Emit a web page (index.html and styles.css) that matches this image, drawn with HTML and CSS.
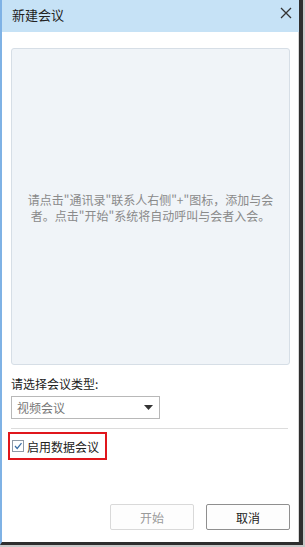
FILE: index.html
```html
<!DOCTYPE html>
<html lang="zh">
<head>
<meta charset="utf-8">
<link rel="stylesheet" href="styles.css">
</head>
<body>
<div class="frame">
  <div class="window">
    <div class="titlebar">
      <span class="title">新建会议</span>
      <svg class="close" width="12" height="12" viewBox="0 0 12 12"><path d="M1 1 L11 11 M11 1 L1 11" stroke="#333" stroke-width="1.3" fill="none"/></svg>
    </div>
    <div class="content">
      <div class="panel">
        <p class="hint">请点击"通讯录"联系人右侧"+"图标，添加与会者。点击"开始"系统将自动呼叫与会者入会。</p>
      </div>
      <div class="label">请选择会议类型:</div>
      <div class="select">
        <span>视频会议</span>
        <svg width="9" height="5" viewBox="0 0 9 5"><path d="M0 0 H9 L4.5 5 Z" fill="#333"/></svg>
      </div>
      <div class="sep"></div>
      <div class="check-row">
        <span class="checkbox"><svg width="10" height="10" viewBox="0 0 10 10"><path d="M2 5 L4.2 7.5 L8.5 2.2" stroke="#3a6ea5" stroke-width="1.2" fill="none"/></svg></span>
        <span class="check-label">启用数据会议</span>
      </div>
      <div class="spacer"></div>
      <div class="buttons">
        <button class="btn disabled">开始</button>
        <button class="btn">取消</button>
      </div>
    </div>
  </div>
</div>
</body>
</html>
```
FILE: styles.css
```css
html, body {
  margin: 0;
  padding: 0;
  background: #d8d8d8;
}
.frame {
  width: 305px;
  height: 547px;
  box-sizing: border-box;
  padding: 0 2px 2px 0;
  background: #c8c8c8;
}
.window {
  width: 303px;
  height: 545px;
  box-sizing: border-box;
  border-left: 2px solid #7fb2e5;
  border-right: 4px solid #2e2e2e;
  border-bottom: 3px solid #2e2e2e;
  background: #ffffff;
  display: flex;
  flex-direction: column;
  font-family: "Noto Sans CJK SC", "Noto Sans", sans-serif;
}
.titlebar {
  height: 32px;
  flex: none;
  background: #c6e2f6;
  display: flex;
  align-items: center;
  justify-content: space-between;
  padding: 0 7px 4px 10px;
  box-sizing: border-box;
}
.title {
  font-size: 13px;
  color: #222;
}
.close {
  margin-top: -2px;
}
.content {
  flex: 1;
  display: flex;
  flex-direction: column;
  padding: 16px 8px 12px 9px;
  border-right: 1px solid #d8d8d8;
}
.panel {
  height: 317px;
  box-sizing: border-box;
  background: #f0f4f8;
  border: 1px solid #d6dee6;
  border-radius: 3px;
  display: flex;
  align-items: center;
  justify-content: center;
  padding: 2px 14px 0;
}
.hint {
  margin: 0;
  font-size: 12px;
  line-height: 16px;
  color: #8a8a8a;
  text-align: center;
}
.label {
  margin-top: 11px;
  font-size: 12px;
  line-height: 16px;
  color: #222;
}
.select {
  margin-top: 4px;
  width: 149px;
  height: 23px;
  box-sizing: border-box;
  border: 1px solid #b8b8b8;
  display: flex;
  align-items: center;
  justify-content: space-between;
  padding: 0 6px 0 5px;
  font-size: 12px;
  color: #777;
}
.sep {
  margin-top: 9px;
  height: 1px;
  background: #dcdcdc;
  margin-right: 2px;
}
.check-row {
  margin-top: 3px;
  margin-left: -3px;
  width: 99px;
  height: 28px;
  box-sizing: border-box;
  border: 2px solid #e0161c;
  display: flex;
  align-items: center;
  padding-left: 2px;
  gap: 3px;
}
.checkbox {
  width: 12px;
  height: 12px;
  box-sizing: border-box;
  border: 1px solid #8f9aa6;
  background: #fff;
  display: flex;
  align-items: center;
  justify-content: center;
}
.check-label {
  font-size: 12px;
  color: #222;
}
.spacer {
  flex: 1;
}
.buttons {
  display: flex;
  justify-content: flex-end;
  gap: 12px;
}
.btn {
  width: 84px;
  height: 26px;
  border: 1px solid #8f8f8f;
  border-radius: 2px;
  background: #fdfdfd;
  font-family: "Noto Sans CJK SC", "Noto Sans", sans-serif;
  font-size: 12px;
  color: #222;
  padding: 0;
}
.btn.disabled {
  border-color: #d9d9d9;
  color: #9a9a9a;
}
```
